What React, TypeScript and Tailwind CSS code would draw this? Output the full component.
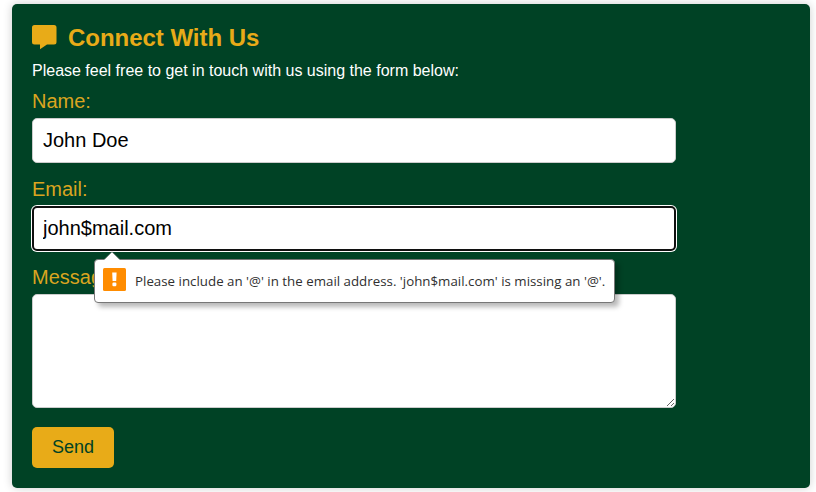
const fieldBase =
  "block w-[644px] rounded-[5px] border border-[#cccccc] bg-white px-[10px] text-[20px] text-black outline-none";

function SpeechIcon() {
  return (
    <svg className="mt-[-2px]" width="25" height="25" viewBox="0 0 25 25" fill="#e8ab18" aria-hidden="true">
      <path d="M2.5 0H22Q24.5 0 24.5 2.5V17Q24.5 19.5 22 19.5H15L8 24.3V19.5H2.5Q0 19.5 0 17V2.5Q0 0 2.5 0Z" />
    </svg>
  );
}

function ValidationBubble() {
  return (
    <div
      role="alert"
      className="absolute left-[62px] top-[53px] z-10 flex h-[44px] w-[521px] items-center rounded-[4px] border border-[#777777] bg-white pl-[8px] shadow-[4px_4px_5px_rgba(0,0,0,0.28)]"
    >
      <svg
        className="absolute left-[8px] top-[-9px]"
        width="18"
        height="10"
        viewBox="0 0 18 10"
        aria-hidden="true"
      >
        <path d="M1 10V9L9 1L17 9V10Z" fill="#ffffff" />
        <path d="M1 8.5L9 .8L17 8.5" fill="none" stroke="#777777" strokeWidth=".5" />
      </svg>
      <svg className="mt-[8px] shrink-0 self-start" width="23" height="23" viewBox="0 0 23 23" aria-hidden="true">
        <rect width="23" height="23" rx="1.5" fill="#ff8c00" />
        <path d="M9.2 4.6H13.6L13.2 13H9.6Z" fill="#ffffff" />
        <rect x="9.4" y="14.6" width="4" height="3.6" rx="1.2" fill="#ffffff" />
      </svg>
      <span className="ml-[9px] whitespace-nowrap font-['Open_Sans',sans-serif] text-[13.3px] leading-[18px] tracking-[0.01px] text-[#303030]">
        Please include an '@' in the email address. 'john$mail.com' is missing an '@'.
      </span>
    </div>
  );
}

export default function App() {
  return (
    <div className="h-[492px] overflow-hidden bg-white pl-[12px] pt-[4px] font-['Liberation_Sans',Arial,sans-serif]">
      <section className="h-[484px] w-[798px] rounded-[5px] bg-[#004225] px-[20px] pt-[20px] shadow-[0_0_10px_rgba(0,0,0,0.2)]">
        <h2 className="flex h-[28px] items-center gap-[11px] text-[24px] font-bold leading-[28px] tracking-[-0.03px] text-[#e8ab18]">
          <SpeechIcon />
          <span>Connect With Us</span>
        </h2>
        <p className="mt-[10px] text-[16px] leading-[18px] text-white">
          Please feel free to get in touch with us using the form below:
        </p>
        <form noValidate onSubmit={(event) => event.preventDefault()}>
          <label htmlFor="name" className="mt-[9px] block text-[20px] leading-[24px] text-[#daa520]">
            Name:
          </label>
          <input id="name" defaultValue="John Doe" className={`${fieldBase} mt-[5px] h-[45px]`} />
          <label htmlFor="email" className="mt-[14px] block text-[20px] leading-[24px] text-[#daa520]">
            Email:
          </label>
          <div className="relative mt-[5px]">
            <input
              id="email"
              defaultValue="john$mail.com"
              className="block h-[45px] w-[644px] rounded-[5px] border-2 border-[#101010] bg-white px-[9px] text-[20px] text-black shadow-[0_0_0_1px_#ffffff] outline-none"
            />
            <ValidationBubble />
          </div>
          <label htmlFor="message" className="mt-[14px] block text-[20px] leading-[24px] text-[#daa520]">
            Message:
          </label>
          <textarea id="message" className={`${fieldBase} mt-[5px] h-[114px] resize`} />
          <button
            type="submit"
            className="mt-[19px] block h-[41px] w-[82px] rounded-[5px] bg-[#e8ab18] text-[18px] text-[#004225]"
          >
            Send
          </button>
        </form>
      </section>
    </div>
  );
}
